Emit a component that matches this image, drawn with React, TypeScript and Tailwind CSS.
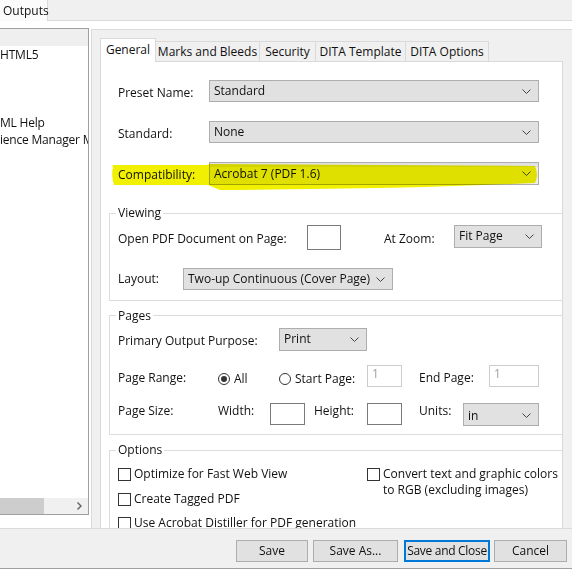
import React from "react";

function Chevron() {
  return (
    <svg width="9" height="5" viewBox="0 0 9 5" className="shrink-0">
      <polyline points="0.5,0.5 4.5,4.5 8.5,0.5" fill="none" stroke="#444" strokeWidth="1" />
    </svg>
  );
}

function Select({ value, className, bg = "bg-[#e1e1e1]" }: { value: string; className: string; bg?: string }) {
  return (
    <div className={`flex items-center justify-between ${bg} border border-[#adadad] pl-[4px] pr-[7px] shrink-0 ${className}`}>
      <span className="whitespace-nowrap">{value}</span>
      <Chevron />
    </div>
  );
}

function TextBox({ className, value, disabled }: { className: string; value?: string; disabled?: boolean }) {
  return (
    <div
      className={`bg-white border shrink-0 pl-[4px] leading-[15px] ${
        disabled ? "border-[#cccccc] text-[#a0a0a0]" : "border-[#7a7a7a]"
      } ${className}`}
    >
      {value}
    </div>
  );
}

function Radio({ checked }: { checked?: boolean }) {
  return (
    <span className="w-[12px] h-[12px] rounded-full border border-[#333] bg-white flex items-center justify-center shrink-0">
      {checked && <span className="w-[6px] h-[6px] rounded-full bg-[#333]" />}
    </span>
  );
}

function Check() {
  return <span className="w-[13px] h-[13px] border border-[#333] bg-white shrink-0 mt-[2px]" />;
}

const tabs = [
  { label: "Marks and Bleeds", w: "w-[104px]" },
  { label: "Security", w: "w-[56px]" },
  { label: "DITA Template", w: "w-[90px]" },
  { label: "DITA Options", w: "w-[83px]" },
];

const treeRows = ["", "HTML5", "", "", "", "ML Help", "ience Manager Mobile App"];

export default function App() {
  return (
    <div className="w-[572px] h-[569px] overflow-hidden bg-white flex flex-col text-[12px] leading-[16px] text-[#111] font-['Open_Sans','Noto_Sans',sans-serif]">
      {/* top tab strip */}
      <div className="h-[21px] flex bg-[#f0f0f0] border-b border-[#dadada] shrink-0">
        <div className="w-[48px] bg-[#fbfbfb] border-r border-[#dadada] -mb-px pl-[3px] flex items-center">Outputs</div>
      </div>

      <div className="flex-1 flex min-h-0">
        {/* outputs tree */}
        <div className="w-[89px] mt-[7px] h-[487px] border-y border-r border-[#a0a0a0] flex flex-col shrink-0 overflow-hidden">
          {treeRows.map((r, i) => (
            <div key={i} className={`h-[17px] flex items-center whitespace-nowrap tracking-[-0.2px] ${i === 0 ? "bg-[#efefef]" : ""}`}>
              {r}
            </div>
          ))}
          <div className="flex-1" />
          <div className="h-[16px] flex items-center bg-[#f0f0f0]">
            <div className="w-[44px] h-full bg-[#cdcdcd]" />
            <div className="flex-1" />
            <svg width="5" height="8" viewBox="0 0 5 8" className="mr-[6px]">
              <polyline points="0.5,0.5 4,4 0.5,7.5" fill="none" stroke="#606060" strokeWidth="1.4" />
            </svg>
          </div>
        </div>

        {/* settings panel */}
        <div className="ml-[2px] mt-[8px] flex-1 bg-[#f0f0f0] border-l border-t border-[#dadada] pl-[8px] pt-[8px] flex min-w-0">
          <div className="w-[463px] flex flex-col min-h-0">
            <div className="flex items-end h-[23px] relative z-10">
              <div className="w-[56px] h-[24px] -mb-px bg-white border-x border-t border-[#d9d9d9] flex items-center justify-center pb-[1px]">
                General
              </div>
              {tabs.map((t) => (
                <div key={t.label} className={`${t.w} h-[20px] bg-[#f0f0f0] border-t border-r border-[#d9d9d9] flex items-center justify-center whitespace-nowrap`}>
                  {t.label}
                </div>
              ))}
            </div>

            <div className="flex-1 bg-white border-x border-t border-[#d9d9d9] relative overflow-hidden">
              {/* general rows */}
              <div className="mt-[18px] pl-[17px] flex items-center">
                <span className="w-[91px] pt-[4px]">Preset Name:</span>
                <Select value="Standard" className="w-[330px] h-[22px]" />
              </div>
              <div className="mt-[19px] pl-[17px] flex items-center">
                <span className="w-[91px] pt-[3px]">Standard:</span>
                <Select value="None" className="w-[330px] h-[22px]" />
              </div>
              <div className="mt-[19px] pl-[17px] flex items-center">
                <span className="w-[91px] pt-[3px]">Compatibility:</span>
                <Select
                  value="Acrobat 7 (PDF 1.6)"
                  className="w-[330px] h-[23px]"
                  bg="bg-[linear-gradient(#e1e1e1_0_4px,#eeeeee_4px)]"
                />
              </div>

              {/* Viewing */}
              <fieldset className="mt-[20px] ml-[8px] w-[470px] border border-[#dcdcdc] pb-[10px]">
                <legend className="ml-[6px] px-[2px]">Viewing</legend>
                <div className="mt-[4px] pl-[8px] flex items-start h-[25px]">
                  <span className="w-[189px] self-center pt-[2px]">Open PDF Document on Page:</span>
                  <TextBox className="w-[34px] h-[25px]" />
                  <span className="ml-[43px] w-[70px] self-center pt-[2px]">At Zoom:</span>
                  <Select value="Fit Page" className="w-[88px] h-[23px] pb-[1px]" />
                </div>
                <div className="mt-[18px] pl-[8px] flex items-center">
                  <span className="w-[65px]">Layout:</span>
                  <Select value="Two-up Continuous (Cover Page)" className="w-[210px] h-[22px]" />
                </div>
              </fieldset>

              {/* Pages */}
              <fieldset className="mt-[6px] ml-[8px] w-[470px] border border-[#dcdcdc] pb-[8px]">
                <legend className="ml-[6px] px-[2px] pt-[1px]">Pages</legend>
                <div className="mt-[4px] pl-[8px] flex items-center">
                  <span className="w-[161px] pt-[2px]">Primary Output Purpose:</span>
                  <Select value="Print" className="w-[88px] h-[23px] pb-[1px]" />
                </div>
                <div className="mt-[13px] pl-[8px] flex items-center">
                  <span className="w-[100px] pt-[4px]">Page Range:</span>
                  <span className="w-[61px] flex items-center gap-[4px] pt-[7px]">
                    <Radio checked />
                    <span>All</span>
                  </span>
                  <span className="w-[88px] flex items-center gap-[4px] pt-[7px]">
                    <Radio />
                    <span className="whitespace-nowrap">Start Page:</span>
                  </span>
                  <TextBox className="w-[35px] h-[22px]" value="1" disabled />
                  <span className="ml-[17px] w-[70px] pt-[4px]">End Page:</span>
                  <TextBox className="w-[50px] h-[22px]" value="1" disabled />
                </div>
                <div className="mt-[16px] pl-[8px] flex items-start h-[23px]">
                  <span className="w-[100px]">Page Size:</span>
                  <span className="w-[52px]">Width:</span>
                  <TextBox className="w-[35px] h-[22px]" />
                  <span className="ml-[9px] w-[53px]">Height:</span>
                  <TextBox className="w-[35px] h-[22px]" />
                  <span className="ml-[17px] w-[44px]">Units:</span>
                  <Select value="in" className="w-[76px] h-[23px] pt-[2px]" />
                </div>
              </fieldset>

              {/* Options */}
              <fieldset className="mt-[7px] ml-[8px] w-[470px] border border-[#dcdcdc] pb-[8px]">
                <legend className="ml-[6px] px-[2px]">Options</legend>
                <div className="mt-[8px] pl-[8px] flex">
                  <div className="w-[249px] flex flex-col">
                    <div className="flex gap-[3px]">
                      <Check />
                      <span>Optimize for Fast Web View</span>
                    </div>
                    <div className="flex gap-[3px] mt-[9px]">
                      <Check />
                      <span>Create Tagged PDF</span>
                    </div>
                    <div className="flex gap-[3px] mt-[8px] whitespace-nowrap">
                      <Check />
                      <span>Use Acrobat Distiller for PDF generation</span>
                    </div>
                  </div>
                  <div className="flex gap-[3px]">
                    <Check />
                    <span>
                      Convert text and graphic colors
                      <br />
                      to RGB (excluding images)
                    </span>
                  </div>
                </div>
              </fieldset>

              {/* highlighter stroke */}
              <svg
                className="absolute left-[9px] top-[100px] mix-blend-multiply pointer-events-none"
                width="428"
                height="30"
                viewBox="0 0 428 30"
              >
                <path
                  d="M3,5 Q1,4 4,3 L96,3 L100,2 L425,4 Q429,13 425,21 Q300,27 110,28 L98,23 L4,23 Q1,14 3,5 Z"
                  fill="#f0f000"
                />
              </svg>
            </div>
          </div>
        </div>
      </div>

      {/* buttons */}
      <div className="h-[41px] shrink-0 bg-[#f0f0f0] border-t border-[#dadada] border-b border-b-[#a0a0a0] flex justify-end items-start pt-[11px] pr-[5px] whitespace-nowrap">
        <button className="w-[72px] h-[22px] bg-[#e1e1e1] border border-[#adadad]">Save</button>
        <button className="ml-[5px] w-[85px] h-[22px] bg-[#e1e1e1] border border-[#adadad]">Save As...</button>
        <button className="ml-[6px] w-[86px] h-[22px] bg-[#e1e1e1] border-2 border-[#0078d7] tracking-[-0.3px]">Save and Close</button>
        <button className="ml-[4px] w-[73px] h-[22px] bg-[#e1e1e1] border border-[#adadad]">Cancel</button>
      </div>
    </div>
  );
}
